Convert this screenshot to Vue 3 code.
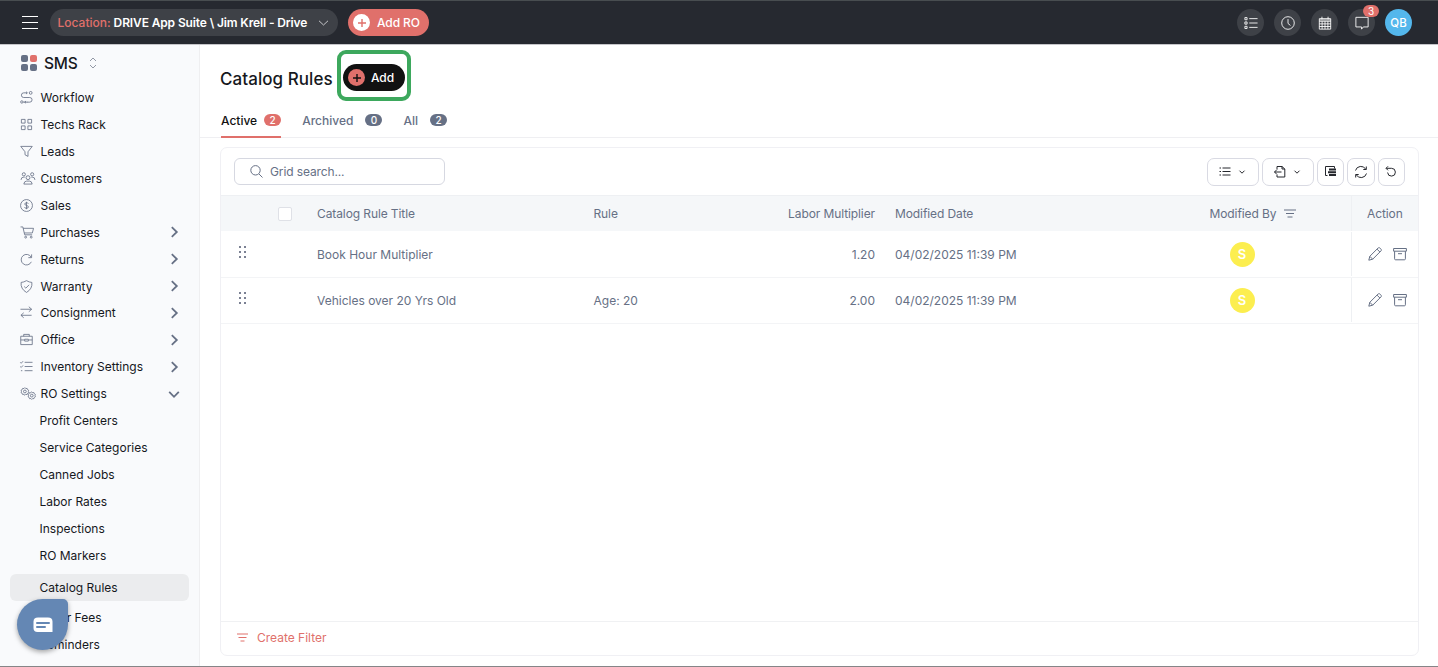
<template>
  <div class="app">
    <header class="topbar">
      <button class="burger" aria-label="Menu"><span></span><span></span><span></span></button>
      <div class="location">
        <span class="location-label">Location:</span>
        <span class="location-name">DRIVE App Suite \ Jim Krell - Drive</span>
        <svg class="ico" width="9" height="6" viewBox="0 0 9 6"><path d="M0 .8l4.500 4.200L9 .8" /></svg>
      </div>
      <button class="add-ro">
        <span class="plus">
          <svg class="ico" width="8" height="8" viewBox="0 0 8 8"><path d="M4 0v8M0 4h8" /></svg>
        </span>
        Add RO
      </button>
      <div class="top-actions">
        <span v-for="a in topActions" :key="a.icon" class="round">
          <svg class="ico" width="14" height="14" viewBox="0 0 16 16"><path :d="icons[a.icon]" /></svg>
          <span v-if="a.badge" class="notify">{{ a.badge }}</span>
        </span>
        <span class="avatar">QB</span>
      </div>
    </header>

    <div class="body">
      <aside class="sidebar">
        <div class="brand">
          <div class="logo"><i></i><i class="hot"></i><i></i><i></i></div>
          <span class="brand-name">SMS</span>
          <svg class="ico sorter" width="8" height="12" viewBox="0 0 8 12"><path d="M1 4l3-3 3 3M1 8l3 3 3-3" /></svg>
        </div>
        <nav>
          <div v-for="item in menu" :key="item.label" class="nav-item">
            <span class="nav-icon">
              <svg class="ico" :width="item.w || 13" height="13" :viewBox="`0 0 ${item.vw || 14} 14`">
                <path :d="icons[item.icon]" />
              </svg>
            </span>
            <span>{{ item.label }}</span>
            <svg v-if="item.arrow" class="ico arrow" :class="item.arrow" width="12" height="12" viewBox="0 0 12 12">
              <path d="M3.8 1.2L8.8 6l-5 4.8" />
            </svg>
          </div>
          <div v-for="s in subMenu" :key="s" class="sub-item" :class="{ active: s === 'Catalog Rules' }">{{ s }}</div>
        </nav>
        <div class="chat">
          <svg width="20" height="16" viewBox="0 0 20 16">
            <path d="M5 0.5h10q4.5 0 4.5 4.2V15H4.5Q0.5 15 0.5 11V4.7Q0.5 0.5 5 0.5z" fill="#fff" />
            <path d="M4 6h12M4 10h8" stroke="#6487b4" stroke-width="2" stroke-linecap="round" />
          </svg>
        </div>
      </aside>

      <main class="main">
        <div class="title-row">
          <h1>Catalog Rules</h1>
          <div class="highlight">
            <button class="add">
              <span class="plus">
                <svg class="ico" width="8" height="8" viewBox="0 0 8 8"><path d="M4 0v8M0 4h8" /></svg>
              </span>
              Add
            </button>
          </div>
        </div>
        <div class="tabs">
          <div v-for="t in tabs" :key="t.label" class="tab" :class="{ active: t.active }">
            {{ t.label }}<span class="count">{{ t.count }}</span>
          </div>
        </div>

        <section class="card">
          <div class="toolbar">
            <div class="search">
              <svg class="ico" width="13" height="13" viewBox="0 0 13 13">
                <path d="M5.5 0.6a4.7 4.7 0 1 0 0 9.4a4.7 4.7 0 1 0 0-9.4M9 9l3.5 3.5" />
              </svg>
              <span>Grid search...</span>
            </div>
            <div class="tools">
              <button v-for="t in tools" :key="t.icon" class="tool" :class="{ wide: t.menu }">
                <svg class="ico" width="14" height="14" viewBox="0 0 14 14">
                  <path :d="icons[t.icon]" />
                  <path v-if="t.fill" :d="t.fill" class="solid" />
                </svg>
                <svg v-if="t.menu" class="ico" width="6" height="4" viewBox="0 0 6 4"><path d="M0.5 0.7L3 3.2 5.5 0.7" /></svg>
              </button>
            </div>
          </div>

          <div class="row head">
            <span></span>
            <span><i class="check"></i></span>
            <span>Catalog Rule Title</span>
            <span>Rule</span>
            <span class="num">Labor Multiplier</span>
            <span>Modified Date</span>
            <span class="by">Modified By
              <svg class="ico" width="12" height="9" viewBox="0 0 12 9"><path d="M0 1h12M2 4.5h8M3.5 8h5" /></svg>
            </span>
            <span class="action">Action</span>
          </div>
          <div v-for="r in rows" :key="r.title" class="row">
            <span class="drag">
              <svg width="7" height="13" viewBox="0 0 7 13">
                <path d="M0 0h2v2H0zM5 0h2v2H5zM0 5h2v2H0zM5 5h2v2H5zM0 10h2v2H0zM5 10h2v2H5z" fill="#7b8193" />
              </svg>
            </span>
            <span></span>
            <span>{{ r.title }}</span>
            <span>{{ r.rule }}</span>
            <span class="num">{{ r.multiplier }}</span>
            <span>{{ r.modified }}</span>
            <span><b class="user">{{ r.by }}</b></span>
            <span class="action">
              <svg class="ico" width="14" height="14" viewBox="0 0 14 14"><path :d="icons.pencil" /></svg>
              <svg class="ico" width="14" height="14" viewBox="0 0 14 14"><path :d="icons.archive" /></svg>
            </span>
          </div>

          <div class="card-foot">
            <svg class="ico" width="11" height="9" viewBox="0 0 11 9"><path d="M0 1h11M1.5 4.5h8M3.5 8h4" /></svg>
            Create Filter
          </div>
        </section>
      </main>
    </div>
  </div>
</template>

<script setup>
const icons = {
  list: 'M1 1.800h2.500v2.500H1zM1 6.800h2.500v2.500H1zM1 11.800h2.500v2.500H1zM6 3h9.500M6 8h9.500M6 13h9.500',
  clock: 'M8 .8a7.200 7.200 0 1 0 0 14.400a7.200 7.200 0 1 0 0-14.400M8 3.500v5l2.800 2.300',
  calendar: 'M1.500 3h13v12h-13zM1.500 6h13M1.500 9h13M1.500 12h13M4.700 6v9M8 6v9M11.300 6v9M4.500 .8v3M11.500 .8v3M1.500 4.500h13',
  message: 'M1 1.500h14v11H9.500L7.500 15V12.500H1z',
  workflow: 'M7.500 2H4a2.500 2.500 0 0 0 0 5h6.500a2.500 2.500 0 0 1 0 5H7.500M6.500 .8L8 2 6.500 3.200M11.500 .5a1.500 1.500 0 1 0 0 3a1.500 1.500 0 1 0 0-3M2 10.500a1.300 1.300 0 1 0 0 2.600a1.300 1.300 0 1 0 0-2.600M3.500 12H8M6.500 10.800L5 12l1.500 1.200',
  grid: 'M1.500 1.500h4v4h-4zM8.500 1.500h4v4h-4zM1.500 8.500h4v4h-4zM8.500 8.500h4v4h-4z',
  funnel: 'M.8 1.500h12.400L8.600 7.300v5L5.400 10.500V7.300z',
  people: 'M3.500 .8a1.700 1.700 0 1 0 0 3.400a1.700 1.700 0 1 0 0-3.400M12.500 .8a1.700 1.700 0 1 0 0 3.400a1.700 1.700 0 1 0 0-3.400M8 4a2.100 2.100 0 1 0 0 4.200a2.100 2.100 0 1 0 0-4.200M.5 8.500q0-3 3-3h1M15.500 8.500q0-3-3-3h-1M3.500 13q.4-3.200 3-3.200h3q2.600 0 3 3.200z',
  dollar: 'M7 .6a6.400 6.400 0 1 0 0 12.800a6.400 6.400 0 1 0 0-12.800M9 5Q8.600 4 7 4T5.100 5.400Q5.100 6.600 7 6.900T9 8.500Q9 10 7 10T4.900 8.900M7 3v8',
  cart: 'M0 1h2.500l2 8.500h8M2.800 2.500h11.200L12.700 7.500H4M5.500 11a1 1 0 1 0 0 2a1 1 0 1 0 0-2M11.500 11a1 1 0 1 0 0 2a1 1 0 1 0 0-2',
  redo: 'M12.500 1.500v3.500H9M12 4.500A5.700 5.700 0 1 0 12.200 9.500',
  shield: 'M7 .7q3 1.800 5.800 1.900Q13.600 9.500 7 13.400Q.4 9.500 1.200 2.600Q4 2.500 7 .7M4.500 7l1.800 1.800L9.800 5.200',
  swap: 'M.5 3.500h12M9.500 .8l3 2.700-3 2.700M12.500 10H1M4 7.300L1 10l3 2.700',
  briefcase: 'M.8 3.500h12.400v9H.8zM4 3.500v-2h6v2M.8 7.500h4M9.200 7.500h4M5 6.700h4v2H5z',
  checks: 'M5 2.500h8.500M5 7h8.500M5 11.500h8.500M.3 2.500l1 1 2-2.200M.3 7l1 1 2-2.200M1 11.500h1.500',
  gears: 'M4.600 .7l1 1 1.400-.2.500 1.300 1.200.7-.4 1.300.4 1.300-1.200.7-.5 1.300-1.400-.2-1 1-1-1-1.400.2-.5-1.300-1.200-.7.400-1.300-.4-1.300 1.200-.7.500-1.300 1.400.2zM4.600 3.300a1.500 1.500 0 1 0 0 3a1.500 1.500 0 1 0 0-3M12 5.200l1 1 1.300-.2.500 1.300 1.100.7-.4 1.300.4 1.300-1.100.7-.5 1.300-1.300-.2-1 1-1-1-1.300.2-.5-1.300-1.100-.7.400-1.300-.4-1.300 1.100-.7.500-1.300 1.300.2zM12 7.800a1.500 1.500 0 1 0 0 3a1.500 1.500 0 1 0 0-3',
  rowsMenu: 'M1.500 3h1.500M1.500 6.500h1.500M1.500 10h1.500M4.500 3h8M4.500 6.500h8M4.500 10h8',
  exportFile: 'M4 4.500V1.500h5L11.800 4v8H4V9.500M9 1.500V4h2.800M8.500 7H1.500M3.700 4.800L1.500 7 3.700 9.200',
  columns: 'M3.500 10.500H1.500v-9h9V3.500',
  refresh: 'M1.500 5.500A5.600 5.600 0 0 1 11.800 4.300M12.500 8.500A5.600 5.600 0 0 1 2.200 9.700M12.300 1.500v3H9.300M1.700 12.500v-3h3',
  undo: 'M4 1.300L2 3.300l2 2M2.200 3.300H7.500a3.900 3.900 0 1 1-3.900 4.200',
  pencil: 'M.8 13.200L1.800 9.300 10.300.8q1-.5 2.200.7t.7 2.200L4.700 12.200zM9 2.100L11.900 5M1.800 9.300l2.900 2.900',
  archive: 'M.6 1.500h12.800v2.700H.6zM1.600 4.200v7.600q0 1 1 1h8.800q1 0 1-1V4.200M5 6.700h4'
}

const topActions = [
  { icon: 'list' },
  { icon: 'clock' },
  { icon: 'calendar' },
  { icon: 'message', badge: 3 }
]

const menu = [
  { label: 'Workflow', icon: 'workflow' },
  { label: 'Techs Rack', icon: 'grid' },
  { label: 'Leads', icon: 'funnel' },
  { label: 'Customers', icon: 'people', w: 16, vw: 16 },
  { label: 'Sales', icon: 'dollar' },
  { label: 'Purchases', icon: 'cart', w: 15 , vw: 15, arrow: 'right' },
  { label: 'Returns', icon: 'redo', arrow: 'right' },
  { label: 'Warranty', icon: 'shield', arrow: 'right' },
  { label: 'Consignment', icon: 'swap', arrow: 'right' },
  { label: 'Office', icon: 'briefcase', arrow: 'right' },
  { label: 'Inventory Settings', icon: 'checks', arrow: 'right' },
  { label: 'RO Settings', icon: 'gears', w: 17, vw: 17, arrow: 'down' }
]

const subMenu = [
  'Profit Centers',
  'Service Categories',
  'Canned Jobs',
  'Labor Rates',
  'Inspections',
  'RO Markers',
  'Catalog Rules',
  'Other Fees',
  'Reminders'
]

const tabs = [
  { label: 'Active', count: 2, active: true },
  { label: 'Archived', count: 0 },
  { label: 'All', count: 2 }
]

const tools = [
  { icon: 'rowsMenu', menu: true },
  { icon: 'exportFile', menu: true },
  { icon: 'columns', fill: 'M5 3.500h7v2H5zM4 6.200h8v2H4zM5 9h7v2H5z' },
  { icon: 'refresh' },
  { icon: 'undo' }
]

const rows = [
  { title: 'Book Hour Multiplier', rule: '', multiplier: '1.20', modified: '04/02/2025 11:39 PM', by: 'S' },
  { title: 'Vehicles over 20 Yrs Old', rule: 'Age: 20', multiplier: '2.00', modified: '04/02/2025 11:39 PM', by: 'S' }
]
</script>

<style>
body {
  margin: 0;
}
</style>

<style scoped>
.app {
  width: 1438px;
  height: 667px;
  box-sizing: border-box;
  border-bottom: 1px solid #858587;
  display: flex;
  flex-direction: column;
  overflow: hidden;
  background: #fff;
  color: #16181d;
  font-family: Inter, "Liberation Sans", sans-serif;
  font-size: 12px;
}

.app * {
  box-sizing: border-box;
}

button {
  font: inherit;
  border: 0;
  padding: 0;
}

.ico {
  display: block;
  flex: none;
  fill: none;
  stroke: currentColor;
  stroke-width: 1;
  overflow: visible;
}

/* top bar */
.topbar {
  flex: none;
  height: 45px;
  padding: 0 26px 0 22px;
  display: flex;
  align-items: center;
  background: #262930;
  border-top: 1px solid #484d50;
  border-bottom: 1px solid #c5c5c9;
  color: #fff;
}

.burger {
  width: 16px;
  margin-right: 12px;
  display: flex;
  flex-direction: column;
  gap: 5px;
  background: none;
}

.burger span {
  height: 1px;
  background: #fff;
}

.location {
  width: 288px;
  height: 27px;
  padding: 0 10px 0 7.5px;
  border-radius: 14px;
  display: flex;
  align-items: center;
  gap: 3px;
  background: #3e4147;
  font-weight: 600;
  white-space: nowrap;
}

.location-label {
  color: #e0706b;
  font-weight: 500;
}

.location-name {
  letter-spacing: -0.13px;
}

.location .ico {
  margin-left: auto;
  color: #c5c6c9;
}

.add-ro {
  width: 81px;
  height: 27px;
  margin-left: 10px;
  padding-left: 5px;
  border-radius: 14px;
  display: flex;
  align-items: center;
  gap: 7px;
  background: #e0706b;
  color: #fff;
  font-weight: 500;
  white-space: nowrap;
}

.plus {
  width: 17px;
  height: 17px;
  border-radius: 50%;
  display: flex;
  align-items: center;
  justify-content: center;
  background: #fff;
  color: #e0706b;
}

.plus .ico {
  stroke-width: 1.4;
}

.add-ro,
.add {
  letter-spacing: -0.1px;
}

.top-actions {
  margin-left: auto;
  display: flex;
  gap: 10px;
}

.round,
.avatar {
  position: relative;
  width: 27px;
  height: 27px;
  border-radius: 50%;
  display: flex;
  align-items: center;
  justify-content: center;
  background: #3e4147;
}

.avatar {
  background: #54b7ec;
  font-size: 11.5px;
  font-weight: 500;
}

.notify {
  position: absolute;
  top: -4px;
  right: -4px;
  width: 16px;
  height: 12px;
  border-radius: 6px;
  background: #e0706b;
  font-size: 10px;
  line-height: 12px;
  text-align: center;
}

.body {
  flex: 1;
  min-height: 0;
  display: flex;
}

/* sidebar */
.sidebar {
  position: relative;
  flex: none;
  width: 200px;
  border-right: 1px solid #efeff1;
  background: #f9fafc;
}

.brand {
  height: 39px;
  padding: 0 0 3px 21px;
  display: flex;
  align-items: center;
}

.logo {
  width: 16px;
  display: grid;
  grid-template-columns: 7px 7px;
  gap: 2px;
}

.logo i {
  height: 7px;
  border-radius: 2px;
  background: #667085;
}

.logo .hot {
  background: #e0706b;
}

.brand-name {
  margin: 0 11px 0 7px;
  font-size: 15.5px;
  font-weight: 500;
  letter-spacing: -0.2px;
}

.sorter {
  color: #9298a5;
}

.nav-item {
  height: 26.95px;
  padding: 0 19px 0 20px;
  display: flex;
  align-items: center;
}

.nav-icon {
  width: 20.5px;
  color: #667085;
}

.nav-icon .ico {
  stroke-width: 0.9;
}

.arrow {
  margin-left: auto;
  color: #667085;
  stroke-width: 1.8;
}

.arrow.down {
  transform: rotate(90deg);
}

.sub-item {
  height: 26.95px;
  margin: 0 10px;
  padding-left: 29.5px;
  line-height: 27px;
}

.sub-item.active {
  margin: 5px 10px 3.5px;
  border-radius: 6px;
  background: #ebecee;
}

.chat {
  position: absolute;
  left: 17px;
  top: 554px;
  width: 51px;
  height: 51px;
  border-radius: 50% 5px 50% 50%;
  display: flex;
  align-items: center;
  justify-content: center;
  background: #6487b4;
  box-shadow: 0 2px 5px rgba(0, 0, 0, 0.35);
}

.chat svg {
  fill: none;
}

/* page */
.main {
  flex: 1;
  min-width: 0;
  display: flex;
  flex-direction: column;
}

.title-row {
  height: 62px;
  padding: 5px 0 0 20px;
  display: flex;
  align-items: flex-start;
}

h1 {
  width: 117px;
  margin: 0;
  font-size: 17px;
  font-weight: 500;
  letter-spacing: 0.06px;
  line-height: 58px;
  white-space: nowrap;
}

.highlight {
  width: 74px;
  height: 51px;
  padding-top: 4px;
  border: 4px solid #3da85d;
  border-radius: 9px;
  display: flex;
  align-items: center;
  justify-content: center;
}

.add {
  width: 62px;
  height: 27px;
  padding-left: 5px;
  border-radius: 14px;
  display: flex;
  align-items: center;
  gap: 6px;
  background: #111;
  color: #fff;
  font-weight: 500;
}

.add .plus {
  background: #e0706b;
  color: #111;
}

.tabs {
  height: 31px;
  padding-left: 21px;
  display: flex;
  gap: 21px;
  border-bottom: 1px solid #efeff2;
}

.tab {
  height: 31px;
  padding-bottom: 5px;
  display: flex;
  align-items: center;
  color: #667085;
  font-weight: 500;
}

.tab.active {
  color: #111;
  border-bottom: 2px solid #e0706b;
  padding-bottom: 3px;
}

.count {
  width: 17px;
  height: 12px;
  margin-left: 12px;
  border-radius: 6px;
  background: #667085;
  color: #fff;
  font-size: 10px;
  line-height: 12px;
  text-align: center;
}

.active .count {
  margin-left: 7px;
  background: #e0706b;
}

.card {
  flex: 1;
  margin: 9px 19px 10px 20px;
  border: 1px solid #f0f0f4;
  border-radius: 7px;
  display: flex;
  flex-direction: column;
  color: #667085;
}

.toolbar {
  height: 47px;
  padding: 0 13px;
  display: flex;
  align-items: center;
  justify-content: space-between;
}

.search {
  width: 211px;
  height: 27px;
  padding-left: 15px;
  border: 1px solid #d6d8e1;
  border-radius: 6px;
  display: flex;
  align-items: center;
  gap: 7px;
  letter-spacing: -0.12px;
}

.tools {
  display: flex;
  gap: 3px;
}

.tool {
  width: 27.4px;
  height: 28px;
  border: 1px solid #d9dae3;
  border-radius: 7px;
  display: flex;
  align-items: center;
  justify-content: center;
  gap: 7px;
  background: #fff;
  color: #25272d;
}

.tool.wide {
  width: 52px;
  padding-right: 3px;
}

.solid {
  fill: currentColor;
  stroke: none;
}

.row {
  height: 46px;
  padding-bottom: 1px;
  border-bottom: 1px solid #f3f4f6;
  display: grid;
  grid-template-columns: 57px 39px 276.5px 180px 101.5px 354.5px 121.5px 1fr;
  grid-template-rows: 100%;
  align-items: center;
  white-space: nowrap;
}

.head {
  height: 37px;
  padding-bottom: 0;
  border-top: 1px solid #eef0f3;
  border-bottom-color: #fff;
  background: #f5f7f9;
  letter-spacing: -0.1px;
}

.check {
  display: block;
  width: 14px;
  height: 14px;
  border: 1px solid #dfe1e7;
  border-radius: 2px;
  background: #fff;
}

.num {
  text-align: right;
}

.num + span {
  padding-left: 20px;
}

.by {
  display: flex;
  align-items: center;
  gap: 8px;
  margin-left: -20px;
}

.drag {
  padding-left: 18px;
}

.user {
  width: 25px;
  height: 25px;
  border-radius: 50%;
  display: flex;
  align-items: center;
  justify-content: center;
  background: #fcee4f;
  color: #fff;
  font-size: 13px;
  font-weight: 600;
}

.action {
  height: 100%;
  padding-left: 16px;
  border-left: 1px solid #eef0f3;
  display: flex;
  align-items: center;
  gap: 11px;
}

.head .action {
  padding-left: 15px;
}

.card-foot {
  height: 34px;
  margin-top: auto;
  padding: 0 0 2px 16px;
  border-top: 1px solid #f0f1f3;
  display: flex;
  align-items: center;
  gap: 9px;
  color: #e0706b;
}
</style>
